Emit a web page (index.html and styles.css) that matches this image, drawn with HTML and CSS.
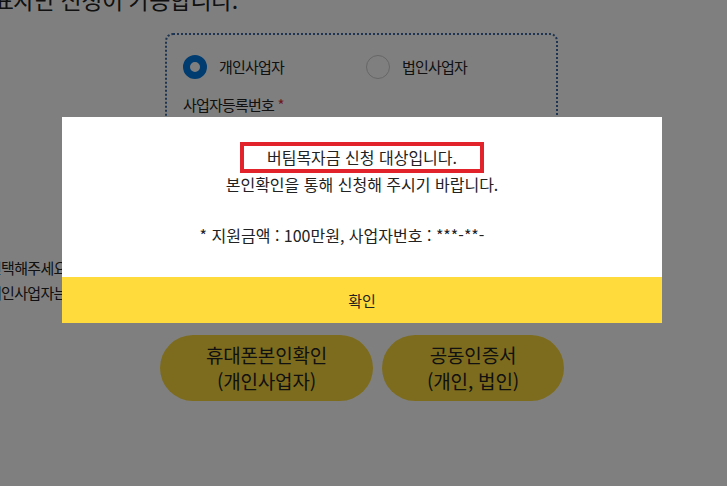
FILE: index.html
```html
<!DOCTYPE html>
<html lang="ko">
<head>
<meta charset="utf-8">
<title>버팀목자금 신청</title>
<link rel="stylesheet" href="styles.css">
</head>
<body>
<div class="page">
  <h2 class="title">대표자만 신청이 가능합니다.</h2>
  <div class="card">
    <div class="radios">
      <label class="radio"><span class="dot on"></span><span>개인사업자</span></label>
      <label class="radio"><span class="dot"></span><span>법인사업자</span></label>
    </div>
    <div class="field-label">사업자등록번호 <span class="req">*</span></div>
    <div class="input"></div>
  </div>
  <div class="notes">
    <p class="note">선택해주세요</p>
    <p class="note">개인사업자는</p>
  </div>
  <div class="actions">
    <button class="pill pill-phone" type="button">휴대폰본인확인<br>(개인사업자)</button>
    <button class="pill pill-cert" type="button">공동인증서<br>(개인, 법인)</button>
  </div>
</div>

<div class="overlay"></div>
<div class="modal">
  <div class="modal-body">
    <p class="hl">버팀목자금 신청 대상입니다.</p>
    <p class="msg">본인확인을 통해 신청해 주시기 바랍니다.</p>
    <p class="info">* 지원금액 : 100만원, 사업자번호 : ***-**-</p>
  </div>
  <button class="confirm" type="button">확인</button>
</div>
</body>
</html>
```

FILE: styles.css
```css
* { box-sizing: border-box; }
html, body { margin: 0; padding: 0; }
body {
  width: 727px;
  height: 486px;
  overflow: hidden;
  background: #fff;
  font-family: "Noto Sans CJK KR", "Noto Sans", sans-serif;
  color: #222;
}
.page {
  display: flex;
  flex-direction: column;
}
.title {
  margin: -18px 0 0 -28px;
  font-size: 23px;
  line-height: 35px;
  font-weight: 400;
  letter-spacing: -0.5px;
  white-space: nowrap;
}
.card {
  margin: 16px 0 0 165px;
  width: 393px;
  height: 200px;
  border: 2px dotted #3a6aa0;
  border-radius: 8px;
  padding: 20px 16px;
}
.radios {
  display: flex;
}
.radio {
  display: flex;
  align-items: center;
  gap: 12px;
  width: 185px;
  font-size: 15px;
  letter-spacing: -0.8px;
  line-height: 24px;
}
.radio + .radio { margin-left: 9px; }
.dot {
  width: 24px;
  height: 24px;
  border-radius: 50%;
  border: 1px solid #ccc;
  background: #fff;
}
.dot.on {
  border: 7px solid #0078e0;
}
.field-label {
  margin-top: 15px;
  font-size: 15px;
  letter-spacing: -0.8px;
  line-height: 22px;
}
.req { color: #e0323c; }
.input {
  margin-top: 8px;
  height: 40px;
  border: 1px solid #ccc;
  border-radius: 4px;
}
.notes {
  margin-top: 22px;
}
.note {
  margin: 0 0 0 -12px;
  font-size: 15px;
  line-height: 25px;
  letter-spacing: -0.7px;
  white-space: nowrap;
}
.actions {
  display: flex;
  gap: 9px;
  margin: 30px 0 0 160px;
}
.pill {
  height: 66px;
  border: 0;
  border-radius: 33px;
  background: #fad83c;
  color: #222;
  font-family: inherit;
  font-size: 19px;
  line-height: 26px;
  letter-spacing: -0.2px;
  padding: 0;
}
.pill-phone { width: 213px; }
.pill-cert { width: 182px; }

.overlay {
  position: fixed;
  inset: 0;
  background: rgba(0, 0, 0, 0.5);
}
.modal {
  position: fixed;
  top: 117px;
  left: 62px;
  width: 600px;
  background: #fff;
  display: flex;
  flex-direction: column;
}
.modal-body {
  display: flex;
  flex-direction: column;
  align-items: center;
  padding: 25px 0 31px;
  font-size: 16px;
  color: #222;
}
.modal-body p { margin: 0; }
.hl {
  border: 4px solid #e3232b;
  line-height: 23px;
  width: 244px;
  text-align: center;
  white-space: nowrap;
}
.msg {
  line-height: 22px;
}
.info {
  margin-top: 29px !important;
  padding-right: 40px;
  line-height: 22px;
  white-space: nowrap;
}
.confirm {
  height: 46px;
  border: 0;
  background: #ffdb3b;
  color: #222;
  font-family: inherit;
  font-size: 15px;
  padding: 0;
}
```
